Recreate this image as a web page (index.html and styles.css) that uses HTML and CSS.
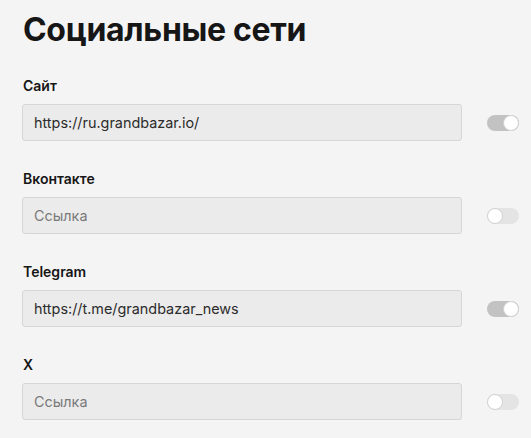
FILE: index.html
```html
<!DOCTYPE html>
<html lang="ru">
<head>
<meta charset="utf-8">
<link rel="stylesheet" href="styles.css">
</head>
<body>
<div class="page">
  <h1 class="title">Социальные сети</h1>
  <div class="field">
    <div class="label">Сайт</div>
    <div class="row">
      <div class="input">https://ru.grandbazar.io/</div>
      <div class="toggle on"><span class="knob"></span></div>
    </div>
  </div>
  <div class="field">
    <div class="label">Вконтакте</div>
    <div class="row">
      <div class="input placeholder">Ссылка</div>
      <div class="toggle"><span class="knob"></span></div>
    </div>
  </div>
  <div class="field">
    <div class="label">Telegram</div>
    <div class="row">
      <div class="input">https://t.me/grandbazar_news</div>
      <div class="toggle on"><span class="knob"></span></div>
    </div>
  </div>
  <div class="field">
    <div class="label">X</div>
    <div class="row">
      <div class="input placeholder">Ссылка</div>
      <div class="toggle"><span class="knob"></span></div>
    </div>
  </div>
</div>
</body>
</html>
```
FILE: styles.css
```css
html, body {
  margin: 0;
  padding: 0;
  background: #f5f4f4;
}
body {
  font-family: Inter, "Noto Sans", sans-serif;
  color: #161616;
}
.page {
  padding: 10px 12px 0 22px;
  display: flex;
  flex-direction: column;
}
.title {
  margin: 0 0 0 1px;
  font-size: 32px;
  font-weight: 700;
  line-height: 40px;
  letter-spacing: -0.3px;
}
.field {
  display: flex;
  flex-direction: column;
  gap: 8px;
  margin-top: 28px;
}
.field:first-of-type {
  margin-top: 26px;
}
.label {
  font-size: 14px;
  font-weight: 600;
  line-height: 20px;
  padding-left: 1px;
}
.row {
  display: flex;
  align-items: center;
  gap: 25px;
}
.input {
  flex: 0 0 440px;
  box-sizing: border-box;
  height: 37px;
  display: flex;
  align-items: center;
  padding-left: 11px;
  background: #ebebeb;
  border: 1px solid #d6d6d6;
  border-radius: 3px;
  font-size: 14.4px;
  color: #2b2b2b;
}
.input.placeholder {
  color: #7a7a7a;
}
.toggle {
  width: 32px;
  height: 16px;
  box-sizing: border-box;
  border-radius: 8px;
  background: #e4e4e4;
  position: relative;
}
.toggle.on {
  background: #c2c2c2;
}
.knob {
  position: absolute;
  top: 0;
  left: 0;
  width: 16px;
  height: 16px;
  box-sizing: border-box;
  border-radius: 50%;
  background: #fff;
  border: 1px solid #d2d2d2;
}
.toggle.on .knob {
  left: 16px;
}
```
